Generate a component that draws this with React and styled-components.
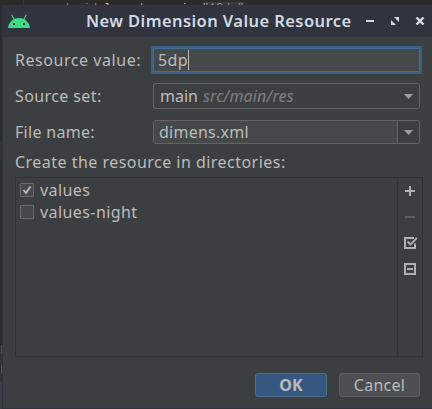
import React from 'react';
import styled, { createGlobalStyle } from 'styled-components';

const Global = createGlobalStyle`
  * { box-sizing: border-box; }
  body { margin: 0; overflow: hidden; background: #2b2b2b; }
`;

const Desktop = styled.div`
  width: 432px;
  height: 409px;
  display: grid;
  grid-template: 5px 404px / 2px 430px;
  background: #2b2b2b;
  color: #bbbbbb;
  font: 16px/20px "Noto Sans", sans-serif;
  overflow: hidden;
`;

const EditorStrip = styled.div`
  grid-column: 1 / 3;
  display: flex;
  height: 5px;
  overflow: hidden;
`;

const Guide = styled.div`
  width: 1px;
  margin-left: 23px;
  background: #393939;
`;

const Code = styled.pre`
  margin: 1px 0 0 24px;
  font: 12px/16px "Liberation Mono", monospace;
  letter-spacing: -0.2px;
  color: #bababa;
  height: 16px;
`;

const Prefix = styled.span`
  color: #9876aa;
`;

const Value = styled.span`
  background: #3a3a3a;
  color: #8c8c8c;
`;

const EditorEdge = styled.div`
  display: grid;
  grid-template-rows: 137px 18px 185px 8px 1px 11px 9px 8px 27px;
`;

const EdgePart = styled.div`
  margin-left: ${(p) => (p.$thin ? 1 : 0)}px;
  background: ${(p) => p.$color};
`;

const Dialog = styled.section`
  display: grid;
  grid-template-rows: 32px 371px 1px;
  background: #3c3f41;
  border-left: 1px solid #2f343f;
`;

const TitleBar = styled.header`
  display: grid;
  grid-template-columns: 83px 269px 23px 28px 24px;
  align-items: center;
  background: #2f343f;
  color: #d3dae3;
  font-size: 16.5px;
  font-weight: 600;
  svg { display: block; }
`;

const BottomEdge = styled.div`
  background: #2f343f;
`;

const Body = styled.main`
  padding: 9px 0 0 12px;
`;

const Text = styled.span`
  display: block;
  white-space: pre;
  letter-spacing: ${(p) => p.$track || 0}px;
`;

const Field = styled.label`
  display: grid;
  grid-template-columns: 136px 271px;
  align-items: center;
  height: ${(p) => p.$height}px;
  margin-bottom: ${(p) => p.$gap}px;
`;

const Input = styled.div`
  height: 28px;
  display: flex;
  align-items: center;
  padding-left: 5px;
  border: 2px solid #3d6185;
  border-radius: 2px;
  background: #45494a;
  box-shadow: inset 0 0 0 1px #466d94;
`;

const Caret = styled.div`
  width: 1px;
  height: 20px;
  background: #bbbbbb;
`;

const Combo = styled.div`
  height: ${(p) => p.$height}px;
  margin: 0 2px;
  display: grid;
  grid-template-columns: 1fr 22px;
  border: 1px solid #646464;
  border-radius: 3px;
  overflow: hidden;
`;

const ComboValue = styled.div`
  display: flex;
  align-items: center;
  padding-left: ${(p) => (p.$editable ? 5 : 6)}px;
  background: ${(p) => (p.$editable ? '#45494a' : 'transparent')};
`;

const Muted = styled(Text)`
  color: #808080;
  font-style: italic;
  margin-left: 5px;
`;

const ArrowCell = styled.div`
  display: grid;
  place-items: center;
  border-left: 1px solid ${(p) => (p.$editable ? '#646464' : 'transparent')};
`;

const Panel = styled.div`
  display: grid;
  grid-template-columns: 381px 25px;
  width: 408px;
  height: 180px;
  margin-top: 5px;
  border: 1px solid #323232;
`;

const List = styled.div`
  padding: 1px 0 0 4px;
`;

const Item = styled.label`
  height: 22px;
  display: flex;
  align-items: center;
  gap: 6px;
`;

const Check = styled.div`
  width: 14px;
  height: 14px;
  border: 1px solid #6b6b6b;
  border-radius: 1px;
  background: #43494a;
  svg { display: block; }
`;

const Tools = styled.div`
  display: grid;
  grid-template-rows: repeat(4, 26px);
  place-items: center;
  border-left: 1px solid #323232;
  svg { display: block; }
`;

const Actions = styled.footer`
  display: flex;
  gap: 12px;
  margin: 16px 0 0 240px;
`;

const Button = styled.button`
  width: ${(p) => (p.$primary ? 72 : 81)}px;
  height: 24px;
  padding: 0;
  display: grid;
  place-items: center;
  border: 1px solid ${(p) => (p.$primary ? '#4c708c' : '#5e6060')};
  border-radius: 3px;
  background: ${(p) => (p.$primary ? '#365880' : '#4c5052')};
  color: #bbbbbb;
  font: ${(p) => (p.$primary ? 700 : 400)} 16px/20px "Noto Sans", sans-serif;
`;

const Arrow = () => (
  <svg width="9" height="5" viewBox="0 0 9 5"><path d="M0 0h9L4.5 5z" fill="#9da0a2" /></svg>
);

const Robot = () => (
  <svg width="22" height="15" viewBox="0 0 22 15">
    <path d="M0 14C.5 9 4.5 4 11 4s10.500 5 11 10z" fill="#3ddc84" />
    <path d="M6.500 6L3.700.7M15.500 6L18.300.7" stroke="#3ddc84" strokeWidth="1.1" />
    <rect x="5" y="9" width="2" height="2" fill="#2f343f" />
    <rect x="15" y="9" width="2" height="2" fill="#2f343f" />
  </svg>
);

const RobotSlot = styled.div`
  padding-left: 5px;
`;

export default function App() {
  return (
    <>
      <Global />
      <Desktop>
        <EditorStrip>
          <Guide />
          <Code><Prefix>android</Prefix>:layout_margin=<Value>"10dp"</Value></Code>
        </EditorStrip>
        <EditorEdge>
          <EdgePart $color="#2b2b2b" />
          <EdgePart $color="#323232" />
          <EdgePart $color="#2b2b2b" />
          <EdgePart $color="#5a5a5a" $thin />
          <EdgePart $color="#3c3c3c" />
          <EdgePart $color="#313335" />
          <EdgePart $color="#574b86" $thin />
          <EdgePart $color="#313335" />
          <EdgePart $color="#3c3f41" />
        </EditorEdge>
        <Dialog>
          <TitleBar>
            <RobotSlot><Robot /></RobotSlot>
            <Text $track={0.42}>New Dimension Value Resource</Text>
            <svg width="22" height="8" viewBox="0 0 22 8"><path d="M11 3h8v2h-8z" fill="#d3dae3" /></svg>
            <svg width="22" height="8" viewBox="0 0 22 8"><path d="M16 0h5v5zM13 3v5h5z" fill="#d3dae3" /></svg>
            <svg width="22" height="8" viewBox="0 0 22 8"><path d="M10.500.5l7 7M17.500.5l-7 7" stroke="#d3dae3" strokeWidth="2.4" /></svg>
          </TitleBar>
          <Body>
            <Field $height={28} $gap={9}>
              <Text $track={0.55}>Resource value:</Text>
              <Input><Text $track={0.4}>5dp</Text><Caret /></Input>
            </Field>
            <Field $height={26} $gap={11}>
              <Text $track={0.4}>Source set:</Text>
              <Combo $height={26}>
                <ComboValue><Text>main</Text><Muted $track={0.15}>src/main/res</Muted></ComboValue>
                <ArrowCell><Arrow /></ArrowCell>
              </Combo>
            </Field>
            <Field $height={24} $gap={8}>
              <Text $track={0.3}>File name:</Text>
              <Combo $height={24}>
                <ComboValue $editable><Text $track={0.25}>dimens.xml</Text></ComboValue>
                <ArrowCell $editable><Arrow /></ArrowCell>
              </Combo>
            </Field>
            <Text $track={0.47}>Create the resource in directories:</Text>
            <Panel>
              <List>
                <Item>
                  <Check><svg width="12" height="12" viewBox="0 0 12 12"><path d="M2.500 6l2.500 3L9.500 2.500" fill="none" stroke="#bbbbbb" strokeWidth="1.9" /></svg></Check>
                  <Text $track={0.4}>values</Text>
                </Item>
                <Item><Check /><Text $track={0.42}>values-night</Text></Item>
              </List>
              <Tools>
                <svg width="12" height="12" viewBox="0 0 12 12"><path d="M5 1h2v4h4v2H7v4H5V7H1V5h4z" fill="#afb1b3" /></svg>
                <svg width="12" height="12" viewBox="0 0 12 12"><path d="M1 5h10v2H1z" fill="#5d5f60" /></svg>
                <svg width="14" height="12" viewBox="-1 0 14 12"><path d="M10 1H1v10h10V6.500" fill="none" stroke="#afb1b3" strokeWidth="2" /><path d="M3.500 4.500l3 3L13 1" fill="none" stroke="#afb1b3" strokeWidth="1.8" /></svg>
                <svg width="12" height="12" viewBox="0 0 12 12"><path d="M1 1h10v10H1z" fill="none" stroke="#afb1b3" strokeWidth="2" /><path d="M3 5h6v2H3z" fill="#afb1b3" /></svg>
              </Tools>
            </Panel>
            <Actions>
              <Button $primary><Text>OK</Text></Button>
              <Button><Text $track={0.25}>Cancel</Text></Button>
            </Actions>
          </Body>
          <BottomEdge />
        </Dialog>
      </Desktop>
    </>
  );
}
